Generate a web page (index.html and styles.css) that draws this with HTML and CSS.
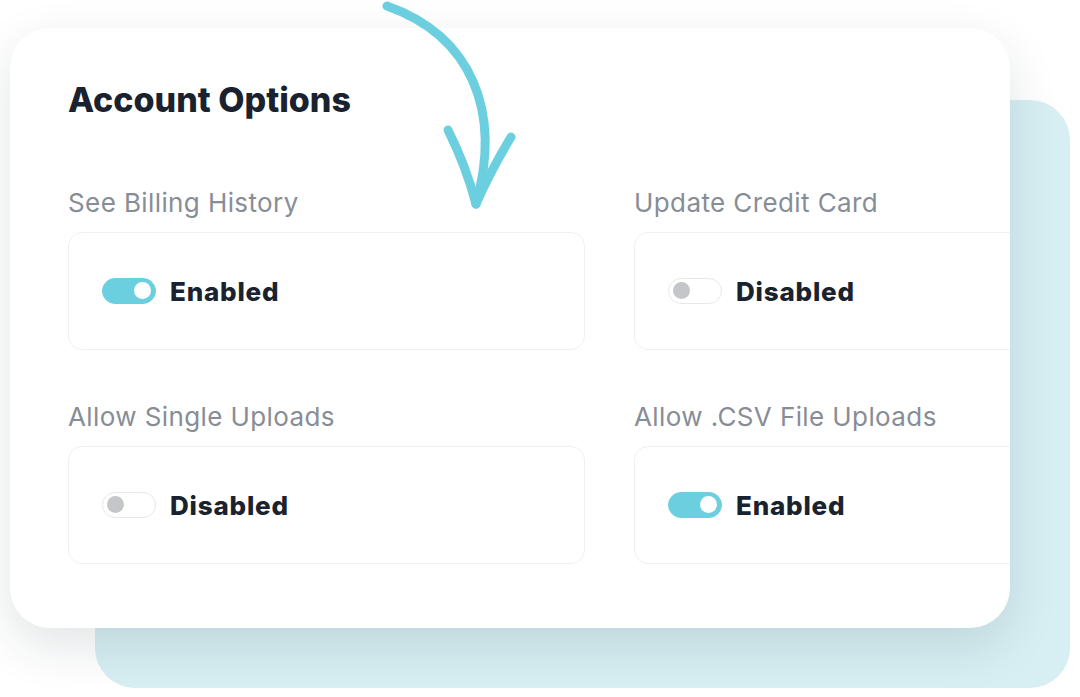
FILE: index.html
```html
<!DOCTYPE html>
<html lang="en">

<head>
    <meta charset="UTF-8">
    <meta name="viewport" content="width=device-width, initial-scale=1.0">
    <title>Account Options</title>
    <link rel="stylesheet" href="styles.css">
</head>

<body>
    <div class="stage">
        <div class="card">
            <h1>Account Options</h1>
            <div class="options">
                <div class="option">
                    <div class="option-label">See Billing History</div>
                    <div class="option-box">
                        <span class="toggle on"></span>
                        <span class="state">Enabled</span>
                    </div>
                </div>
                <div class="option">
                    <div class="option-label">Update Credit Card</div>
                    <div class="option-box">
                        <span class="toggle"></span>
                        <span class="state">Disabled</span>
                    </div>
                </div>
                <div class="option">
                    <div class="option-label">Allow Single Uploads</div>
                    <div class="option-box">
                        <span class="toggle"></span>
                        <span class="state">Disabled</span>
                    </div>
                </div>
                <div class="option">
                    <div class="option-label">Allow .CSV File Uploads</div>
                    <div class="option-box">
                        <span class="toggle on"></span>
                        <span class="state">Enabled</span>
                    </div>
                </div>
            </div>
        </div>

        <svg class="arrow" width="540" height="230" viewBox="0 0 540 230" fill="none">
            <path d="M387 6 C472 36 502 112 476 204" stroke="#6ccfe0" stroke-width="9" stroke-linecap="round" />
            <path d="M448 130 Q466 166 476 204" stroke="#6ccfe0" stroke-width="9" stroke-linecap="round" />
            <path d="M511 137 Q490 172 476 204" stroke="#6ccfe0" stroke-width="9" stroke-linecap="round" />
        </svg>
    </div>
</body>

</html>
```

FILE: styles.css
```css
body {
    margin: 0;
    background: #ffffff;
    font-family: Inter, "Open Sans", sans-serif;
}

.stage {
    position: relative;
    width: 1080px;
    height: 697px;
    overflow: hidden;
    box-sizing: border-box;
    padding: 28px 0 0 10px;
}

/* teal panel sitting behind the card */
.stage::before {
    content: "";
    position: absolute;
    left: 95px;
    top: 100px;
    width: 975px;
    height: 588px;
    border-radius: 40px;
    background: #d7eff3;
}

.card {
    position: relative;
    width: 1000px;
    height: 600px;
    box-sizing: border-box;
    padding: 52px 0 0 58px;
    background: #ffffff;
    border-radius: 40px;
    box-shadow: 0 18px 50px rgba(20, 40, 50, 0.12);
    overflow: hidden;
}

h1 {
    margin: 0 0 68px 0;
    font-size: 34px;
    line-height: 40px;
    font-weight: 800;
    color: #19222e;
}

.options {
    display: grid;
    grid-template-columns: 517px 517px;
    column-gap: 49px;
    row-gap: 52px;
}

.option-label {
    font-size: 26px;
    line-height: 30px;
    letter-spacing: 0.4px;
    color: #878d96;
    margin-bottom: 14px;
}

.option-box {
    display: flex;
    align-items: center;
    gap: 14px;
    height: 118px;
    box-sizing: border-box;
    padding-left: 33px;
    border: 1.5px solid #eef0f3;
    border-radius: 14px;
}

.toggle {
    position: relative;
    width: 54px;
    height: 26px;
    box-sizing: border-box;
    border-radius: 13px;
    border: 1.5px solid #e6e8eb;
    background: #ffffff;
}

.toggle::after {
    content: "";
    position: absolute;
    top: 3px;
    left: 4px;
    width: 17px;
    height: 17px;
    border-radius: 50%;
    background: #c5c6c9;
}

.toggle.on {
    border-color: #6ccfe0;
    background: #6ccfe0;
}

.toggle.on::after {
    left: auto;
    right: 4px;
    background: #ffffff;
}

.state {
    font-size: 26px;
    font-weight: 800;
    letter-spacing: 0.8px;
    color: #19222e;
}

.arrow {
    position: absolute;
    left: 0;
    top: 0;
}
```
